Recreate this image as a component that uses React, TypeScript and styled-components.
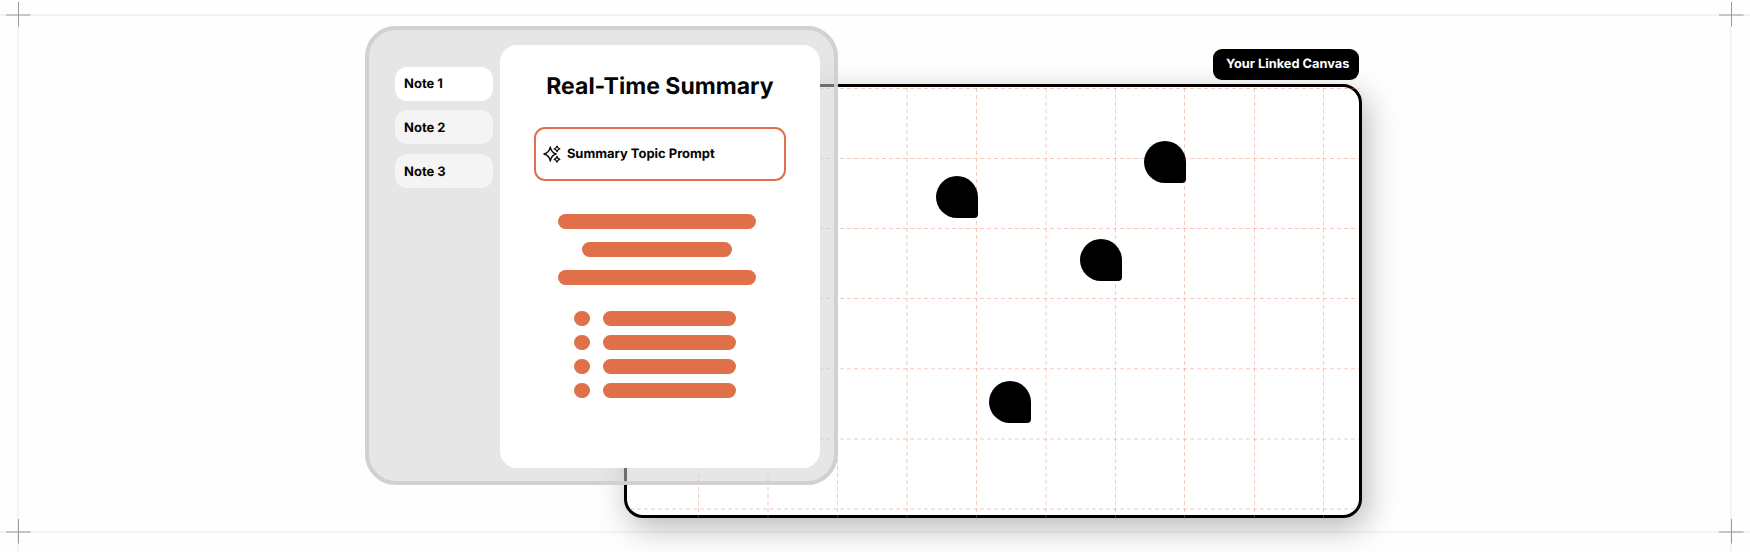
import React from "react";
import styled, { createGlobalStyle } from "styled-components";

const GlobalStyle = createGlobalStyle`
  * { box-sizing: border-box; }
  body {
    margin: 0;
    background: #fefefe;
    font-family: Inter, sans-serif;
    color: #050505;
    text-rendering: geometricPrecision;
  }
`;

const Stage = styled.main`
  position: relative;
  width: 1750px;
  height: 552px;
  overflow: hidden;
  background: #fefefe;
`;

const Guides = styled.svg`
  position: absolute;
  inset: 0;
`;

const CanvasWindow = styled.section`
  position: absolute;
  left: 624px;
  top: 84px;
  width: 738px;
  height: 434.4px;
  border: 3px solid #000;
  border-radius: 19px;
  background: #fff;
  box-shadow: 5px 10px 32px rgba(0, 0, 0, 0.28);
`;

const Grid = styled.svg`
  position: absolute;
  left: -3px;
  top: -3px;
`;

const CanvasLabel = styled.div`
  position: absolute;
  left: 1212.8px;
  top: 48.5px;
  width: 146px;
  height: 31.5px;
  display: flex;
  align-items: center;
  padding: 1px 0 0 13.2px;
  border-radius: 9px;
  background: #000;
  color: #fff;
  font-size: 12.8px;
  font-weight: 700;
  white-space: nowrap;
`;

const Pin = styled.span<{ $x: number; $y: number }>`
  position: absolute;
  left: ${(p) => p.$x}px;
  top: ${(p) => p.$y}px;
  width: 42px;
  height: 42px;
  background: #000;
  border-radius: 50% 50% 4px 50%;
`;

const Panel = styled.section`
  position: absolute;
  left: 365px;
  top: 26px;
  width: 473px;
  height: 459px;
  display: flex;
  align-items: flex-start;
  padding: 19px 18px 17px 30px;
  border-radius: 31px;
  background: rgba(208, 208, 208, 0.53);
`;

const PanelEdge = styled.div`
  position: absolute;
  inset: 0;
  border: 4px solid rgba(208, 208, 208, 0.95);
  border-radius: 31px;
`;

const NoteList = styled.nav`
  display: flex;
  flex-direction: column;
  gap: 9.7px;
  width: 98.3px;
  margin: 21.7px 6.7px 0 0;
`;

const Note = styled.div<{ $active?: boolean }>`
  display: flex;
  align-items: center;
  height: 34px;
  padding: 1px 0 0 9px;
  border-radius: 12px;
  background: ${(p) => (p.$active ? "#fff" : "#f4f4f4")};
  font-size: 13px;
  font-weight: 700;
`;

const Card = styled.article`
  display: flex;
  flex-direction: column;
  width: 320px;
  height: 423px;
  padding-top: 26px;
  border-radius: 17px;
  background: #fff;
`;

const Title = styled.h1`
  margin: 0 0 0 46.3px;
  font-size: 23px;
  line-height: 30px;
  font-weight: 700;
  white-space: nowrap;
`;

const Prompt = styled.div`
  display: flex;
  align-items: center;
  gap: 5px;
  width: 252.5px;
  height: 54.5px;
  margin: 25.6px 0 32.9px 33.9px;
  padding-left: 7px;
  border: 2px solid #e0704a;
  border-radius: 11px;
  font-size: 12.95px;
  font-weight: 700;
`;

const PromptText = styled.span`
  padding-top: 1px;
`;

const Lines = styled.div`
  display: flex;
  flex-direction: column;
  align-items: center;
  gap: 13.2px;
  width: 198px;
  margin-left: 58px;
`;

const Bar = styled.span<{ $w: number }>`
  width: ${(p) => p.$w}px;
  height: 15px;
  border-radius: 7.5px;
  background: #e0704a;
`;

const Bullets = styled.ul`
  display: flex;
  flex-direction: column;
  gap: 9px;
  margin: 26px 0 0 73.8px;
  padding: 0;
  list-style: none;
`;

const Bullet = styled.li`
  display: flex;
  gap: 13px;
`;

const Sparkles = () => (
  <svg width="19" height="18" viewBox="0 0 19 18" fill="none" stroke="#0a0a0a" strokeWidth="1.3" strokeLinejoin="round">
    <path d="M7.3 1.9C8 6 9.7 8.1 13.2 9C9.7 9.9 8 12 7.3 16.1C6.6 12 4.9 9.9 0.9 9C4.9 8.1 6.6 6 7.3 1.9Z" />
    <path d="M14 1.1C14.4 2.8 15.1 3.5 16.8 3.9C15.1 4.3 14.4 5 14 6.7C13.6 5 12.9 4.3 11.2 3.9C12.9 3.5 13.6 2.8 14 1.1Z" />
    <path d="M14 11.5C14.4 13.2 15.1 13.9 16.8 14.3C15.1 14.7 14.4 15.4 14 17.1C13.6 15.4 12.9 14.7 11.2 14.3C12.9 13.9 13.6 13.2 14 11.5Z" />
  </svg>
);

const columns = [74.5, 144, 213.5, 283, 352.5, 422, 491.5, 560.5, 630.5, 699.5];
const rows = [4.5, 74.5, 144.5, 214.5, 284.8, 355, 425];
const pins = [[935.6, 176.4], [1143.7, 141.1], [1079.8, 238.6], [988.8, 381.1]];

export default function App() {
  return (
    <Stage>
      <GlobalStyle />
      <CanvasWindow>
        <Grid width="738" height="435" stroke="#e0704a" strokeOpacity="0.36" strokeWidth="1" strokeDasharray="4 3">
          {columns.map((x) => <line key={x} x1={x} x2={x} y1="4" y2="435" />)}
          {rows.map((y) => <line key={y} x1="6" x2="735" y1={y} y2={y} />)}
        </Grid>
      </CanvasWindow>
      <Guides width="1750" height="552">
        <g stroke="#000" strokeOpacity="0.045" strokeWidth="2">
          <path d="M0 15H1750M0 532H1750M18 27V552M1731 27V552" />
        </g>
        <g stroke="#999" strokeWidth="1">
          {[15, 532].map((y) => [18.5, 1731.5].map((x) => (
            <path key={`${x}-${y}`} d={`M${x - 12.5} ${y}h24.5M${x} ${y - 13}v24.5`} />
          )))}
        </g>
      </Guides>
      <CanvasLabel>Your Linked Canvas</CanvasLabel>
      {pins.map(([x, y]) => <Pin key={x} $x={x} $y={y} />)}
      <Panel>
        <PanelEdge />
        <NoteList>
          <Note $active>Note 1</Note>
          <Note>Note 2</Note>
          <Note>Note 3</Note>
        </NoteList>
        <Card>
          <Title>Real-Time Summary</Title>
          <Prompt><Sparkles /><PromptText>Summary Topic Prompt</PromptText></Prompt>
          <Lines>
            <Bar $w={198} />
            <Bar $w={150} />
            <Bar $w={198} />
          </Lines>
          <Bullets>
            {[0, 1, 2, 3].map((i) => (
              <Bullet key={i}><Bar $w={16} /><Bar $w={133} /></Bullet>
            ))}
          </Bullets>
        </Card>
      </Panel>
    </Stage>
  );
}
